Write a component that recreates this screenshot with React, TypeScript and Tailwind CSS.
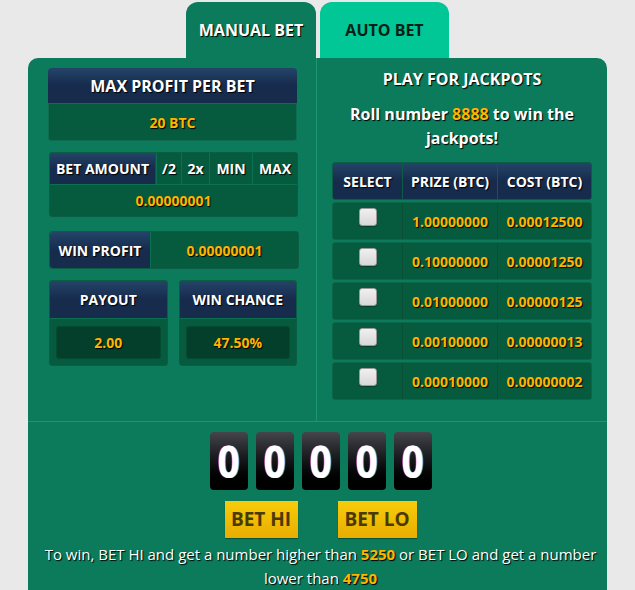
import React from "react";

const navy = "bg-gradient-to-b from-[#234468] to-[#172b4d] via-[#172b4d]";
const sh = "[text-shadow:1px_1px_1px_#000]";

function Check() {
  return (
    <div className="w-[18px] h-[18px] rounded-[3px] bg-gradient-to-b from-[#f0f0f0] to-[#d8d8d8] border border-[#9a9a9a] shadow-[0_1px_1px_rgba(0,0,0,0.3)]" />
  );
}

export default function App() {
  const rows = [
    ["1.00000000", "0.00012500"],
    ["0.10000000", "0.00001250"],
    ["0.01000000", "0.00000125"],
    ["0.00100000", "0.00000013"],
    ["0.00010000", "0.00000002"],
  ];
  return (
    <div
      className="w-[635px] h-[590px] overflow-hidden bg-[#e9e9e9] text-white font-bold"
      style={{ fontFamily: "'Open Sans', 'Noto Sans', sans-serif" }}
    >
      <div className="flex pl-[186px] pt-[2px] gap-[4px]">
        <div className={`w-[130px] h-[56px] rounded-t-[12px] bg-[#0b7b5b] flex items-center justify-center text-[16px] ${sh}`}>
          MANUAL BET
        </div>
        <div className="w-[129px] h-[56px] rounded-t-[12px] bg-[#00c795] flex items-center justify-center text-[16px] text-[#062018]">
          AUTO BET
        </div>
      </div>
      <div className="mx-[28px] bg-[#0b7b5b] rounded-tl-[10px] rounded-tr-[10px] h-[532px]">
        <div className="flex h-[363px]">
          <div className="w-[289px] pl-[20px] pr-[19px] pt-[10px] border-r border-[#1f9470] flex flex-col">
            <div className={`h-[35px] rounded-t-[4px] ${navy} flex items-center justify-center text-[16px] ${sh}`}>
              MAX PROFIT PER BET
            </div>
            <div className={`h-[38px] bg-[#065b3f] border border-[#0f6c4e] rounded-b-[3px] flex items-center justify-center text-[14px] text-[#ffb400] ${sh}`}>
              20 BTC
            </div>
            <div className="mt-[11px] w-[249px] ml-[1px] rounded-[3px] border border-[#0b5e43] bg-[#065b3f]">
              <div className={`flex h-[31px] text-[14px] ${sh}`}>
                <div className={`w-[105px] ${navy} flex items-center justify-center rounded-tl-[3px]`}>BET AMOUNT</div>
                <div className="w-[26px] ml-[1px] bg-[#065b3f] border-x border-[#0b7050] flex items-center justify-center">/2</div>
                <div className="w-[28px] bg-[#065b3f] border-r border-[#0b7050] flex items-center justify-center">2x</div>
                <div className="w-[43px] bg-[#065b3f] border-r border-[#0b7050] flex items-center justify-center">MIN</div>
                <div className="flex-1 bg-[#065b3f] flex items-center justify-center">MAX</div>
              </div>
              <div className={`h-[32px] border-t border-[#0b7050] flex items-center justify-center text-[14px] text-[#ffb400] ${sh}`}>
                0.00000001
              </div>
            </div>
            <div className={`mt-[14px] ml-[1px] w-[250px] h-[38px] flex rounded-[3px] border border-[#0b5e43] text-[14px] ${sh}`}>
              <div className={`w-[100px] ${navy} flex items-center justify-center rounded-l-[3px]`}>WIN PROFIT</div>
              <div className="flex-1 bg-[#065b3f] border-l border-[#0b7050] flex items-center justify-center text-[#ffb400]">0.00000001</div>
            </div>
            <div className="mt-[11px] ml-[1px] flex gap-[11px]">
              {[["PAYOUT", "2.00"], ["WIN CHANCE", "47.50%"]].map(([h, v]) => (
                <div key={h} className="w-[119px] h-[86px] rounded-[3px] border border-[#0b5e43] bg-[#065b3f] flex flex-col">
                  <div className={`h-[39px] ${navy} rounded-t-[3px] flex items-center justify-center text-[14px] ${sh}`}>{h}</div>
                  <div className="flex-1 border-t border-[#0b7050] px-[6px] pt-[7px] pb-[6px]">
                    <div className={`h-[33px] bg-[#043f2c] rounded-[3px] border border-[#054a33] flex items-center justify-center text-[14px] text-[#ffb400] ${sh}`}>{v}</div>
                  </div>
                </div>
              ))}
            </div>
          </div>
          <div className="flex-1 flex flex-col items-center pt-[11px]">
            <div className={`text-[16px] leading-[20px] ${sh}`}>PLAY FOR JACKPOTS</div>
            <div className={`mt-[13px] w-[240px] text-center text-[16px] leading-[24px] ${sh}`}>
              Roll number <span className="text-[#ffb400]">8888</span> to win the jackpots!
            </div>
            <div className="mt-[12px] w-[260px] flex flex-col gap-[2px]">
              <div className={`h-[38px] flex rounded-[3px] border border-[#0b5e43] ${navy} text-[14px] ${sh}`}>
                <div className="w-[70px] flex items-center justify-center border-r border-[#0b5e43]">SELECT</div>
                <div className="w-[95px] flex items-center justify-center border-r border-[#0b5e43]">PRIZE (BTC)</div>
                <div className="flex-1 flex items-center justify-center">COST (BTC)</div>
              </div>
              {rows.map(([p, c]) => (
                <div key={p} className={`h-[38px] flex rounded-[3px] border border-[#0a6848] bg-[#065b3f] text-[14px] text-[#ffb400] ${sh}`}>
                  <div className="w-[70px] flex justify-center pt-[5px] border-r border-[#0a4e36]"><Check /></div>
                  <div className="w-[95px] flex items-center justify-center border-r border-[#0a4e36]">{p}</div>
                  <div className="flex-1 flex items-center justify-center">{c}</div>
                </div>
              ))}
            </div>
          </div>
        </div>
        <div className="border-t border-[#1f9470] flex flex-col items-center pt-[10px] pl-[6px]">
          <div className="flex gap-[8px]">
            {[0, 1, 2, 3, 4].map((i) => (
              <div key={i} className="w-[38px] h-[58px] rounded-[4px] bg-gradient-to-b from-[#44464c] to-[#000] flex items-center justify-center text-[44px] font-bold leading-none text-white [text-shadow:1px_0_0_#3af,-1px_0_0_#f33]">
                <span className="inline-block scale-x-[0.88]">0</span>
              </div>
            ))}
          </div>
          <div className="flex gap-[40px] mt-[11px]">
            <div className="h-[37px] w-[73px] bg-gradient-to-b from-[#f7cc0a] to-[#e8ad00] flex items-center justify-center text-[19px] text-[#4a3a00] shadow-[0_1px_1px_rgba(0,0,0,0.3)]">BET HI</div>
            <div className="h-[37px] w-[79px] bg-gradient-to-b from-[#f7cc0a] to-[#e8ad00] flex items-center justify-center text-[19px] text-[#4a3a00] shadow-[0_1px_1px_rgba(0,0,0,0.3)]">BET LO</div>
          </div>
          <div className={`mt-[4px] w-[570px] text-center text-[15px] leading-[24px] font-normal ${sh}`}>
            To win, BET HI and get a number higher than <span className="font-bold text-[#ffb400]">5250</span> or BET LO and get a number lower than <span className="font-bold text-[#ffb400]">4750</span>
          </div>
        </div>
      </div>
    </div>
  );
}
